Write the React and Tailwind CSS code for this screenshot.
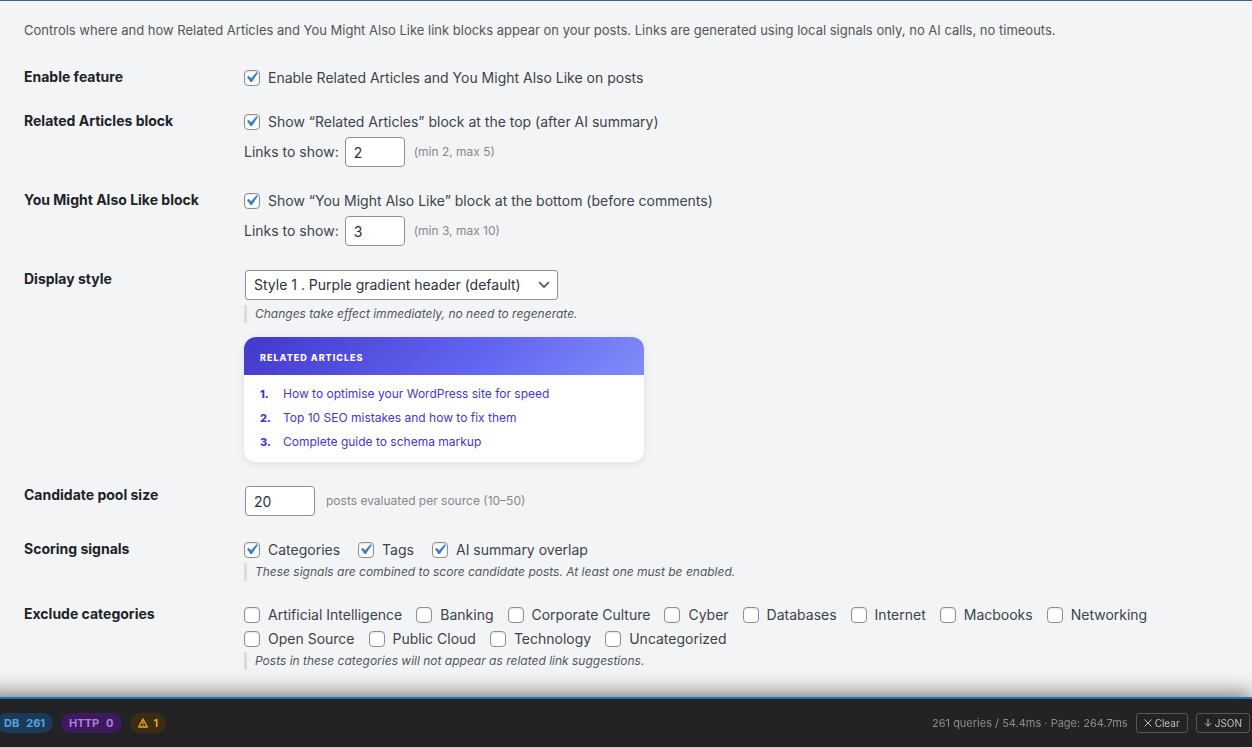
import React from 'react';

const categories = [
  'Artificial Intelligence',
  'Banking',
  'Corporate Culture',
  'Cyber',
  'Databases',
  'Internet',
  'Macbooks',
  'Networking',
  'Open Source',
  'Public Cloud',
  'Technology',
  'Uncategorized',
];

const articles = [
  'How to optimise your WordPress site for speed',
  'Top 10 SEO mistakes and how to fix them',
  'Complete guide to schema markup',
];

const Row = ({ title, children }) => (
  <div className="flex">
    <h2 className="w-[220px] shrink-0 text-sm leading-5 font-bold text-[#1d2327]">{title}</h2>
    <div className="flex-1 min-w-0 pt-px">{children}</div>
  </div>
);

const Checkbox = ({ label, defaultChecked }) => (
  <label className="flex items-center gap-2 h-5">
    <span className="relative flex w-4 h-4">
      <input
        type="checkbox"
        defaultChecked={defaultChecked}
        className="peer appearance-none w-4 h-4 rounded border border-[#8c8f94] bg-white shadow-[inset_0_1px_2px_rgba(0,0,0,0.1)]"
      />
      <svg
        viewBox="0 0 20 20"
        className="absolute -top-[3px] -left-[3px] w-[21px] h-[21px] max-w-none pointer-events-none hidden peer-checked:block"
      >
        <path d="M14.83 4.89l1.34.94-5.81 8.38H9.02L5.78 9.67l1.34-1.25 2.57 2.4z" fill="#3582c4" />
      </svg>
    </span>
    {label}
  </label>
);

const LinkCount = ({ id, value, min, max }) => (
  <div className="flex items-center mt-[5px]">
    <label htmlFor={id}>Links to show:</label>
    <input
      id={id}
      type="text"
      inputMode="numeric"
      defaultValue={value}
      className="w-[60px] h-[30px] ml-[6px] px-2 rounded border border-[#8c8f94] bg-white text-sm text-[#2c3338]"
    />
    <span className="ml-[9px] text-xs text-[#888888]">
      (min {min}, max {max})
    </span>
  </div>
);

const Note = ({ children, className }) => (
  <p className={`border-l-3 border-[#dcdcde] pl-2 text-xs leading-[18px] italic text-[#50575e] ${className}`}>
    {children}
  </p>
);

const App = () => {
  return (
    <div className="min-h-screen bg-[#f3f4f6] border-t border-[#2b6a85] font-[Inter,sans-serif] text-sm leading-5 text-[#3c434a]">
      {/* Settings form */}
      <main className="px-6 pt-[19px] pb-20">
        <p className="mb-[27px] text-[13px] leading-5 text-[#555555]">
          Controls where and how Related Articles and You Might Also Like link blocks appear on your posts. Links are
          generated using local signals only, no AI calls, no timeouts.
        </p>

        <div className="flex flex-col gap-[23px]">
          <Row title="Enable feature">
            <Checkbox label="Enable Related Articles and You Might Also Like on posts" defaultChecked />
          </Row>

          <Row title="Related Articles block">
            <Checkbox label="Show “Related Articles” block at the top (after AI summary)" defaultChecked />
            <LinkCount id="related-count" value="2" min={2} max={5} />
          </Row>

          <Row title="You Might Also Like block">
            <Checkbox label="Show “You Might Also Like” block at the bottom (before comments)" defaultChecked />
            <LinkCount id="also-count" value="3" min={3} max={10} />
          </Row>

          <Row title="Display style">
            <div className="relative w-[313px] ml-px">
              <select
                aria-label="Display style"
                className="block appearance-none w-full h-[30px] pl-2 pr-6 rounded-[3px] border border-[#8c8f94] bg-white text-sm text-[#2c3338]"
              >
                <option>Style 1 . Purple gradient header (default)</option>
              </select>
              <svg viewBox="0 0 20 20" className="absolute right-[6px] top-[7px] w-4 h-4 pointer-events-none">
                <path d="M5 6l5 5 5-5 2 1-7 7-7-7 2-1z" fill="#555" />
              </svg>
            </div>
            <Note className="mt-[5px]">Changes take effect immediately, no need to regenerate.</Note>

            {/* Style preview */}
            <section className="mt-[14px] max-w-[400px] rounded-xl overflow-hidden bg-white shadow-[0_2px_8px_rgba(0,0,0,0.08)]">
              <h3 className="px-4 pt-[11px] pb-[7px] bg-[linear-gradient(135deg,#4338ca_0%,#6366f1_60%,#818cf8_100%)] text-[9px] leading-5 font-extrabold tracking-[1px] uppercase text-white">
                Related Articles
              </h3>
              <ol className="flex flex-col gap-[6px] px-4 pt-[10px] pb-[11px] text-xs leading-[18px] text-[#4338ca]">
                {articles.map((title, i) => (
                  <li key={title} className="flex">
                    <span className="w-[23px] text-[11px] font-extrabold">{i + 1}.</span>
                    <a href="#preview">{title}</a>
                  </li>
                ))}
              </ol>
            </section>
          </Row>

          <Row title="Candidate pool size">
            <div className="flex items-center">
              <input
                id="pool-size"
                type="text"
                inputMode="numeric"
                defaultValue="20"
                className="w-[70px] h-[30px] ml-px px-2 rounded border border-[#8c8f94] bg-white text-sm text-[#2c3338]"
              />
              <label htmlFor="pool-size" className="ml-[11px] text-xs text-[#888888]">
                posts evaluated per source (10–50)
              </label>
            </div>
          </Row>

          <Row title="Scoring signals">
            <div className="flex flex-wrap gap-x-[18px]">
              <Checkbox label="Categories" defaultChecked />
              <Checkbox label="Tags" defaultChecked />
              <Checkbox label="AI summary overlap" defaultChecked />
            </div>
            <Note className="mt-[3px]">
              These signals are combined to score candidate posts. At least one must be enabled.
            </Note>
          </Row>

          <Row title="Exclude categories">
            <div className="flex flex-wrap gap-x-[14px] gap-y-1">
              {categories.map((name) => (
                <Checkbox key={name} label={name} />
              ))}
            </div>
            <Note className="mt-[3px]">Posts in these categories will not appear as related link suggestions.</Note>
          </Row>
        </div>
      </main>

      {/* Debug bar */}
      <footer className="fixed bottom-px -left-5 right-0 h-[50px] flex items-center gap-2 pl-4 pr-[2px] border-t-2 border-[#2271b1] bg-[#232326] shadow-[0_-4px_20px_rgba(0,0,0,0.5)] text-[11px] leading-5">
        <span className="flex gap-[7px] px-2 rounded-full bg-[#1b3a57] font-bold text-[#5ba3e0]">
          <span>DB</span>
          <span>261</span>
        </span>
        <span className="flex gap-[7px] px-2 rounded-full bg-[#3d1a5e] font-bold text-[#b07de0]">
          <span>HTTP</span>
          <span>0</span>
        </span>
        <span className="flex items-center gap-[6px] px-2 rounded-full bg-[#3a2e12] font-bold text-[#f0a520]">
          <svg viewBox="0 0 10 10" className="w-[10px] h-[10px]" fill="none" stroke="currentColor" strokeWidth="1.3">
            <path d="M5 1L9.3 9H.7z" strokeLinejoin="round" />
            <path d="M5 3.6v2.6M5 7v1" />
          </svg>
          1
        </span>
        <span className="ml-auto text-[#8c8c90]">261 queries / 54.4ms · Page: 264.7ms</span>
        <button
          type="button"
          className="flex items-center gap-[3px] h-5 px-[7px] rounded-[3px] border border-[#55555a] text-[10px] text-[#c0c0c4]"
        >
          <svg viewBox="0 0 8 8" className="w-2 h-2" fill="none" stroke="currentColor">
            <path d="M.5.5l7 7M7.5.5l-7 7" />
          </svg>
          Clear
        </button>
        <button
          type="button"
          className="flex items-center gap-[3px] h-5 px-[7px] rounded-[3px] border border-[#55555a] text-[10px] text-[#c0c0c4]"
        >
          <svg viewBox="0 0 8 8" className="w-2 h-2" fill="none" stroke="currentColor">
            <path d="M4 0v7M1 4.2l3 3 3-3" />
          </svg>
          JSON
        </button>
      </footer>
    </div>
  );
};

export default App;
